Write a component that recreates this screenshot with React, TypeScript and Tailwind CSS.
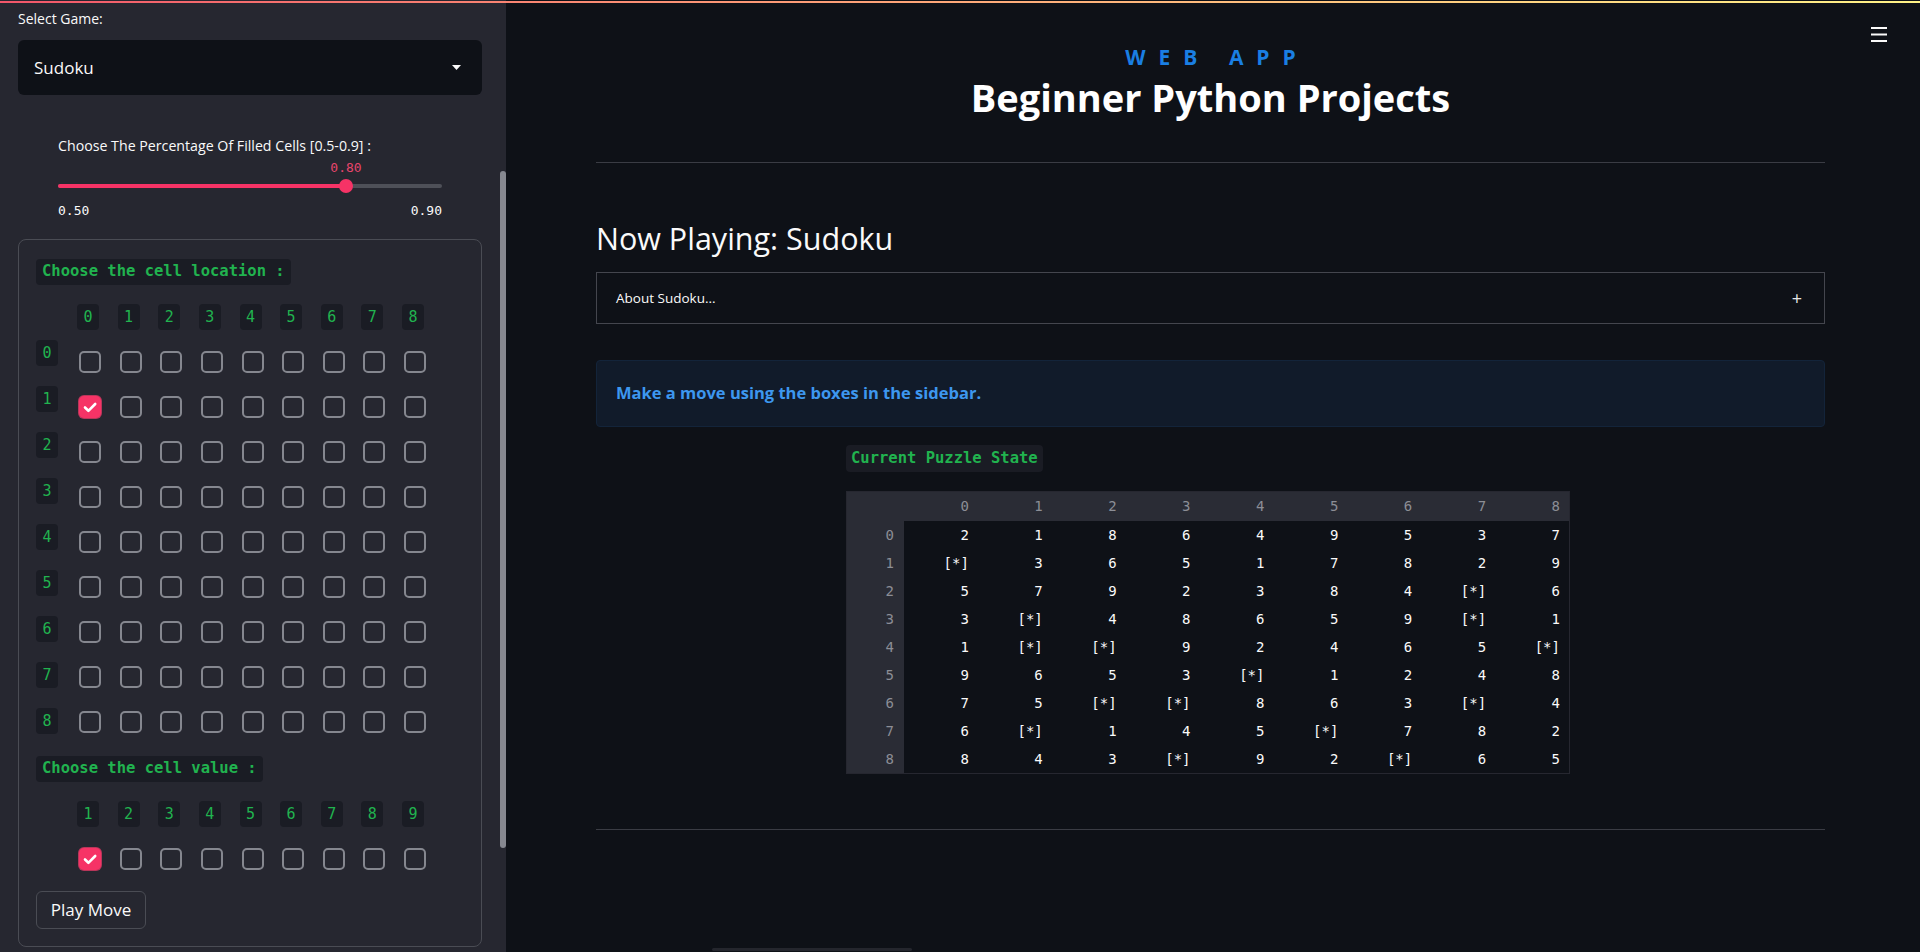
import React from "react";

const PUZZLE: string[][] = [
  ["2", "1", "8", "6", "4", "9", "5", "3", "7"],
  ["[*]", "3", "6", "5", "1", "7", "8", "2", "9"],
  ["5", "7", "9", "2", "3", "8", "4", "[*]", "6"],
  ["3", "[*]", "4", "8", "6", "5", "9", "[*]", "1"],
  ["1", "[*]", "[*]", "9", "2", "4", "6", "5", "[*]"],
  ["9", "6", "5", "3", "[*]", "1", "2", "4", "8"],
  ["7", "5", "[*]", "[*]", "8", "6", "3", "[*]", "4"],
  ["6", "[*]", "1", "4", "5", "[*]", "7", "8", "2"],
  ["8", "4", "3", "[*]", "9", "2", "[*]", "6", "5"],
];

function Badge({ children }: { children: React.ReactNode }) {
  return (
    <div className="flex h-[26px] w-[22px] items-center justify-center rounded-[4px] bg-[#1a1c24] font-['DejaVu_Sans_Mono',monospace] text-[15px] leading-none text-[#21b34f]">
      {children}
    </div>
  );
}

function Checkbox({ checked }: { checked?: boolean }) {
  if (checked) {
    return (
      <div className="ml-[2px] flex h-[22px] w-[22px] items-center justify-center rounded-[5px] bg-[#f63366] ring-1 ring-[#b8365a]">
        <svg width="22" height="22" viewBox="0 0 22 22">
          <path d="M6 11.5l3.4 3.3L16.2 8" fill="none" stroke="#fff" strokeWidth="2.6" strokeLinecap="round" strokeLinejoin="round" />
        </svg>
      </div>
    );
  }
  return <div className="ml-[2px] h-[22px] w-[22px] rounded-[5px] border-2 border-[#85878f]" />;
}

function CodeTitle({ children }: { children: React.ReactNode }) {
  return (
    <div className="inline-flex h-[26px] items-center self-start rounded-[4px] bg-[#1a1c24] px-[6px] font-['DejaVu_Sans_Mono',monospace] text-[15.5px] font-bold leading-none text-[#21b34f]">
      {children}
    </div>
  );
}

export default function App() {
  const cols = [0, 1, 2, 3, 4, 5, 6, 7, 8];
  return (
    <div className="relative flex h-[952px] w-[1920px] overflow-hidden bg-[#0e1117] font-['Open_Sans',sans-serif] text-[#fafafa]">
      {/* top decoration */}
      <div className="absolute left-0 right-0 top-[1px] z-20 h-[2px] bg-gradient-to-r from-[#f2566a] to-[#fff387]" />

      {/* Sidebar */}
      <aside className="relative h-full w-[506px] shrink-0 bg-[#262730]">
        <div className="flex flex-col pl-[18px] pr-[24px] pt-[9px]">
          <div className="h-[20px] text-[14px] leading-[20px]">Select Game:</div>
          <div className="mt-[11px] flex h-[55px] items-center justify-between rounded-[6px] bg-[#0e1117] pl-[16px] pr-[21px]">
            <span className="text-[17px]">Sudoku</span>
            <svg width="9" height="5" viewBox="0 0 9 5">
              <polygon points="0,0 9,0 4.5,5" fill="#fafafa" />
            </svg>
          </div>

          {/* slider */}
          <div className="mt-[41px] flex flex-col px-[40px]">
            <div className="h-[20px] whitespace-nowrap text-[14.2px] leading-[20px]">Choose The Percentage Of Filled Cells [0.5-0.9] :</div>
            <div className="relative mt-[4px] h-[15px]">
              <span className="absolute left-[75%] top-0 -translate-x-1/2 font-['DejaVu_Sans_Mono',monospace] text-[13px] leading-[15px] text-[#e8456c]">0.80</span>
            </div>
            <div className="relative mt-[4px] flex h-[14px] items-center">
              <div className="h-[4px] w-full rounded-full bg-[#4e5058]" />
              <div className="absolute left-0 top-[5px] h-[4px] w-[75%] rounded-full bg-[#f63366]" />
              <div className="absolute left-[75%] top-0 h-[14px] w-[14px] -translate-x-1/2 rounded-full bg-[#f63366]" />
            </div>
            <div className="mt-[10px] flex h-[16px] justify-between font-['DejaVu_Sans_Mono',monospace] text-[13px] leading-[16px]">
              <span>0.50</span>
              <span>0.90</span>
            </div>
          </div>

          {/* form */}
          <div className="mt-[20px] flex h-[708px] flex-col rounded-[8px] border border-[#4a4c54] pl-[17px] pt-[19px]">
            <CodeTitle>Choose the cell location :</CodeTitle>
            <div className="mt-[19px] grid grid-cols-[41px_repeat(9,40.625px)]">
              <div className="flex flex-col gap-[20px] pt-[36px]">
                {cols.map((r) => (
                  <Badge key={r}>{r}</Badge>
                ))}
              </div>
              {cols.map((c) => (
                <div key={c} className="flex flex-col">
                  <Badge>{c}</Badge>
                  <div className="mt-[21px] flex flex-col gap-[23px]">
                    {cols.map((r) => (
                      <Checkbox key={r} checked={c === 0 && r === 1} />
                    ))}
                  </div>
                </div>
              ))}
            </div>

            <div className="mt-[22px] flex">
              <CodeTitle>Choose the cell value :</CodeTitle>
            </div>
            <div className="mt-[19px] grid grid-cols-[41px_repeat(9,40.625px)]">
              <div />
              {cols.map((c) => (
                <div key={c} className="flex flex-col">
                  <Badge>{c + 1}</Badge>
                  <div className="mt-[21px]">
                    <Checkbox checked={c === 0} />
                  </div>
                </div>
              ))}
            </div>

            <button className="mt-[21px] flex h-[38px] w-[110px] items-center justify-center rounded-[6px] border border-[#4a4c54] bg-[#262730] text-[17px] text-[#fafafa]">
              Play Move
            </button>
          </div>
        </div>
        {/* scrollbar */}
        <div className="absolute right-0 top-[171px] h-[677px] w-[6px] rounded-full bg-[#868890]" />
      </aside>

      {/* Main */}
      <main className="relative flex-1">
        <button className="absolute right-[33px] top-[27px]">
          <svg width="16" height="15" viewBox="0 0 16 15">
            <rect x="0" y="0" width="16" height="2" fill="#fafafa" />
            <rect x="0" y="6.5" width="16" height="2" fill="#fafafa" />
            <rect x="0" y="13" width="16" height="2" fill="#fafafa" />
          </svg>
        </button>

        <div className="ml-[90px] flex w-[1229px] flex-col">
          <div className="mt-[45px] flex flex-col items-center">
            <div className="mr-[-13px] h-[24px] text-[21px] font-bold leading-[24px] tracking-[13px] text-[#1a7fe3]">WEB APP</div>
            <h1 className="mt-[4px] h-[48px] text-[38px] font-bold leading-[48px] text-white">Beginner Python Projects</h1>
          </div>
          <div className="mt-[41px] h-px bg-[#3a3c44]" />

          <h2 className="mt-[53px] h-[44px] text-[30.5px] font-normal leading-[44px]">Now Playing: Sudoku</h2>

          <div className="mt-[12px] flex h-[52px] items-center justify-between border border-[#44464e] pl-[19px] pr-[22px]">
            <span className="text-[13.5px]">About Sudoku...</span>
            <span className="text-[18px] leading-none text-[#e6e6e6]">+</span>
          </div>

          <div className="mt-[36px] flex h-[67px] items-center rounded-[4px] border border-[#13243a] bg-[#111b2a] pl-[19px]">
            <span className="text-[16.5px] font-bold text-[#3d97ef]">Make a move using the boxes in the sidebar.</span>
          </div>

          <div className="ml-[250px] mt-[18px] flex w-[724px] flex-col">
            <div className="inline-flex h-[27px] items-center self-start rounded-[4px] bg-[#1a1c24] px-[5px] font-['DejaVu_Sans_Mono',monospace] text-[15.5px] font-bold leading-none text-[#21b34f]">
              Current Puzzle State
            </div>
            <div className="mt-[19px] w-[724px] border border-[#262730] font-['DejaVu_Sans_Mono',monospace] text-[14px]">
              <div className="grid h-[29px] grid-cols-[57px_repeat(9,1fr)] items-center bg-[#2a2c35] text-[#8c8e96]">
                <div />
                {cols.map((c) => (
                  <div key={c} className="pr-[9px] text-right">{c}</div>
                ))}
              </div>
              {PUZZLE.map((row, r) => (
                <div key={r} className="grid h-[28px] grid-cols-[57px_repeat(9,1fr)] items-center">
                  <div className="flex h-full items-center justify-end bg-[#2a2c35] pr-[10px] text-[#8c8e96]">{r}</div>
                  {row.map((v, c) => (
                    <div key={c} className="pr-[9px] text-right text-[#fafafa]">{v}</div>
                  ))}
                </div>
              ))}
            </div>
          </div>

          <div className="mt-[55px] h-px bg-[#3a3c44]" />
        </div>
        <div className="absolute bottom-[1px] left-[206px] h-[3px] w-[200px] rounded-full bg-[#24262d]" />
      </main>
    </div>
  );
}
